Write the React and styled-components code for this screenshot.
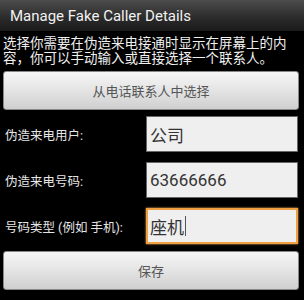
import React from 'react';
import styled, { createGlobalStyle } from 'styled-components';

const GlobalStyle = createGlobalStyle`
    html, body {
        margin: 0;
        padding: 0;
        background: #000;
    }
    body {
        font-family: Roboto, "Noto Sans CJK SC", sans-serif;
    }
`;

const fields = [
    { label: '伪造来电用户:', value: '公司' },
    { label: '伪造来电号码:', value: '63666666' },
    { label: '号码类型 (例如 手机):', value: '座机', focused: true },
];

const App = () => {
    return (
        <Screen>
            <GlobalStyle />
            <TitleBar>Manage Fake Caller Details</TitleBar>
            <Content>
                <Intro>
                    选择你需要在伪造来电接通时显示在屏幕上的内容，你可以手动输入或直接选择一个联系人。
                </Intro>
                <Button>从电话联系人中选择</Button>
                <Form>
                    {fields.map((f) => (
                        <Row key={f.label}>
                            <Label>{f.label}</Label>
                            <Field $focused={f.focused}>
                                {f.value}
                                {f.focused && <Caret />}
                            </Field>
                        </Row>
                    ))}
                </Form>
                <Button>保存</Button>
            </Content>
        </Screen>
    );
};

export default App;

const Screen = styled.div`
    width: 304px;
    height: 300px;
    background: #000;
    overflow: hidden;
`;

const TitleBar = styled.div`
    height: 31px;
    display: flex;
    align-items: center;
    padding-left: 10px;
    box-sizing: border-box;
    background: linear-gradient(#4c4c4c, #2a2a2a 60%, #1a1a1a);
    color: #f2f2f2;
    font-size: 15px;
`;

const Content = styled.div`
    padding: 4px 5px 0 3px;
    display: flex;
    flex-direction: column;
`;

const Intro = styled.div`
    color: #f0f0f0;
    font-size: 13.5px;
    line-height: 14.5px;
    padding: 1px 0 0 0;
    margin-bottom: 6px;
`;

const Button = styled.div`
    height: 39px;
    border-radius: 3px;
    background: linear-gradient(#f6f6f6, #e4e4e4 50%, #cfcfcf);
    border: 1px solid #888;
    box-sizing: border-box;
    display: flex;
    align-items: center;
    justify-content: center;
    color: #555;
    font-size: 13px;
`;

const Form = styled.div`
    display: flex;
    flex-direction: column;
    gap: 10px;
    padding: 6px 0 7px 0;
`;

const Row = styled.div`
    display: flex;
    align-items: center;
    height: 36px;
`;

const Label = styled.div`
    width: 141px;
    padding-left: 2px;
    color: #e6e6e6;
    font-size: 12.5px;
    white-space: nowrap;
`;

const Field = styled.div`
    flex: 1;
    height: 36px;
    box-sizing: border-box;
    background: #efefef;
    border: ${(p) => (p.$focused ? '2px solid #f0a040' : '1px solid #666')};
    box-shadow: ${(p) => (p.$focused ? '0 0 2px #f6b060' : 'none')};
    display: flex;
    align-items: center;
    padding-left: ${(p) => (p.$focused ? '2px' : '3px')};
    color: #333;
    font-size: 17px;
    margin-right: 1px;
`;

const Caret = styled.span`
    display: inline-block;
    width: 1px;
    height: 20px;
    background: #555;
    margin-left: 1px;
`;
